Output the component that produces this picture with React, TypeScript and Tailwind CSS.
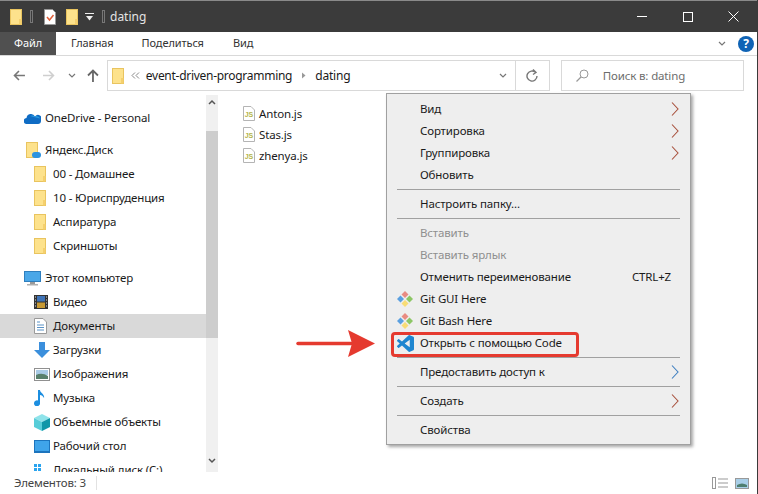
import { ReactNode } from 'react';

const Folder = ({ w = 12, h = 16 }: { w?: number; h?: number }) => (
  <svg width={w} height={h} viewBox="0 0 12 16" className="shrink-0">
    <rect x="0.5" y="0.5" width="11" height="15" fill="#fde28c" stroke="#e9c45f" />
    <rect x="9" y="10" width="2.5" height="5.5" fill="#f5d06e" />
  </svg>
);

const JsFile = () => (
  <svg width="12" height="15" viewBox="0 0 12 15" className="shrink-0">
    <path d="M0.5 0.5H8L11.5 4V14.5H0.5Z" fill="#fff" stroke="#b4b4b4" />
    <text x="6" y="11" textAnchor="middle" fontSize="7" fontWeight="700" fill="#b5b54a" fontFamily="Liberation Sans, sans-serif">JS</text>
  </svg>
);

const GitIcon = () => (
  <svg width="18" height="18" viewBox="0 0 18 18">
    <path d="M9 1L12.5 4.5 9 8 5.5 4.5Z" fill="#e98b82" />
    <path d="M4.5 5.5L8 9 4.5 12.5 1 9Z" fill="#5a9fe0" />
    <path d="M13.5 5.5L17 9 13.5 12.5 10 9Z" fill="#8cc665" />
    <path d="M9 10L12.5 13.5 9 17 5.5 13.5Z" fill="#f8dc75" />
  </svg>
);

const VsCode = () => (
  <svg width="17" height="17" viewBox="0 0 24 24">
    <path
      fill="#1f86d0"
      d="M23.15 2.587L18.21.21a1.494 1.494 0 0 0-1.705.29l-9.46 8.63-4.12-3.128a.999.999 0 0 0-1.276.057L.327 7.261A1 1 0 0 0 .326 8.74L3.899 12 .326 15.26a1 1 0 0 0 .001 1.479L1.65 17.94a.999.999 0 0 0 1.276.057l4.12-3.128 9.46 8.63a1.492 1.492 0 0 0 1.704.29l4.942-2.377A1.5 1.5 0 0 0 24 20.06V3.939a1.5 1.5 0 0 0-.85-1.352zm-5.146 14.861L10.826 12l7.178-5.448v10.896z"
    />
  </svg>
);

const Chevron = ({ color = '#a8503c' }: { color?: string }) => (
  <svg width="8" height="14" viewBox="0 0 8 14" className="shrink-0">
    <path d="M1 0.5L7 7 1 13.5" fill="none" stroke={color} strokeWidth="1.1" />
  </svg>
);

const SmallDown = ({ color = '#777' }: { color?: string }) => (
  <svg width="8" height="6" viewBox="0 0 8 6" className="shrink-0">
    <path d="M1 1L4 4 7 1" fill="none" stroke={color} strokeWidth="1.2" />
  </svg>
);

const Separator = () => <div className="my-[3px] mx-[10px] h-px bg-[#a0a0a0]" />;

const MenuRow = ({ label, icon, right, disabled }: { label: string; icon?: ReactNode; right?: ReactNode; disabled?: boolean }) => (
  <div className={`flex h-[22px] items-center pr-[11px] ${disabled ? 'text-[#8f8f8f]' : 'text-[#1a1a1a]'}`}>
    <div className="flex w-[33px] shrink-0 justify-center pl-[3px]">{icon}</div>
    <span className="flex-1">{label}</span>
    {right}
  </div>
);

const NavRow = ({ label, icon, indent, active, mt }: { label: string; icon: ReactNode; indent?: boolean; active?: boolean; mt?: boolean }) => (
  <div className={`flex h-6 shrink-0 items-center ${indent ? 'pl-[34px]' : 'pl-6'} ${active ? 'bg-[#d9d9d9]' : ''} ${mt ? 'mt-2' : ''}`}>
    <div className={`flex shrink-0 justify-start ${indent ? 'w-[19px]' : 'w-[21px]'}`}>{icon}</div>
    <span className="whitespace-nowrap">{label}</span>
  </div>
);

const OneDrive = () => (
  <svg width="17" height="11" viewBox="0 0 17 11">
    <path d="M3 11a3 3 0 0 1-.5-6A4.5 4.5 0 0 1 11 3.5 3.6 3.6 0 0 1 17 8c0 1.700-1.300 3-3 3Z" fill="#0f6cc4" />
    <path d="M6 3a4.500 4.500 0 0 1 5 .5 3.600 3.600 0 0 1 5 2Z" fill="#2a9be0" />
  </svg>
);

const Monitor = () => (
  <svg width="17" height="15" viewBox="0 0 17 15">
    <rect x="0.500" y="0.500" width="16" height="10" fill="#4aa7e8" stroke="#2f7fbe" />
    <rect x="6" y="11" width="5" height="2" fill="#9a9a9a" />
    <rect x="3" y="13" width="11" height="1.500" fill="#b0b0b0" />
  </svg>
);

const Film = () => (
  <svg width="14" height="14" viewBox="0 0 14 14">
    <rect width="14" height="14" fill="#333" />
    <rect x="3" y="1" width="8" height="5.500" fill="#3f74b8" />
    <rect x="3" y="7.500" width="8" height="5.500" fill="#c79a35" />
    <path d="M1 2h1M1 5h1M1 8h1M1 11h1M12 2h1M12 5h1M12 8h1M12 11h1" stroke="#ddd" />
  </svg>
);

const Doc = () => (
  <svg width="13" height="16" viewBox="0 0 13 16">
    <path d="M.5.5H9L12.500 4V15.500H.5Z" fill="#fff" stroke="#9a9a9a" />
    <path d="M3 4h3M3 7h7M3 9.500h7M3 12h7" stroke="#5b93c7" />
  </svg>
);

const Download = () => (
  <svg width="16" height="16" viewBox="0 0 16 16">
    <path d="M5 0H11V8H16L8 16 0 8H5Z" fill="#3b8fdc" />
  </svg>
);

const Picture = () => (
  <svg width="16" height="13" viewBox="0 0 16 13">
    <rect x="0.500" y="0.500" width="15" height="12" fill="#fff" stroke="#909090" />
    <rect x="2" y="2" width="12" height="5" fill="#a9cbe6" />
    <path d="M2 7Q8 4 14 8V11H2Z" fill="#58806c" />
  </svg>
);

const Music = () => (
  <svg width="12" height="16" viewBox="0 0 12 16">
    <path d="M4 0H6C6 3 11 4 10 8 9 6 7.500 5 6 5V13A3 3 0 1 1 4 10.500Z" fill="#1c8ee0" />
  </svg>
);

const Cube = () => (
  <svg width="16" height="17" viewBox="0 0 16 17">
    <path d="M8 0L16 4 8 8 0 4Z" fill="#8fe3ea" />
    <path d="M0 4L8 8V17L0 13Z" fill="#57cdd8" />
    <path d="M16 4L8 8V17L16 13Z" fill="#0f97a8" />
  </svg>
);

const Desktop = () => (
  <svg width="16" height="13" viewBox="0 0 16 13">
    <rect x="0.500" y="0.500" width="15" height="11" fill="#3fa4ea" stroke="#1c74bd" />
    <rect y="11" width="16" height="2" fill="#1c74bd" />
  </svg>
);

const Drive = () => (
  <svg width="16" height="13" viewBox="0 0 16 13">
    <rect x="0" y="0" width="3" height="3" fill="#2aa4ef" />
    <rect x="4" y="0" width="3" height="3" fill="#2aa4ef" />
    <rect x="0" y="4" width="3" height="3" fill="#2aa4ef" />
    <rect x="4" y="4" width="3" height="3" fill="#2aa4ef" />
    <rect x="1" y="8" width="15" height="5" fill="#c8c8c8" />
  </svg>
);

export default function App() {
  return (
    <div className="relative flex h-[494px] w-[758px] flex-col overflow-hidden border-r border-[#3a3a3a] bg-white font-['Noto_Sans','Open_Sans',sans-serif] text-[11.5px] tracking-[-0.15px] text-[#1a1a1a]">
      {/* заголовок окна */}
      <div className="flex h-8 shrink-0 items-center border-t border-[#8a8a8a] bg-[#3b3b3b] pl-[10px]">
        <Folder />
        <div className="ml-[8px] h-[13px] w-[3px] border border-[#777]" />
        <div className="ml-[11px]">
          <svg width="12" height="16" viewBox="0 0 12 16">
            <path d="M.5.5H8.500L11.500 3.500V15.500H.5Z" fill="#fff" stroke="#999" />
            <path d="M3 8L5.500 11 9.500 6" fill="none" stroke="#e0603a" strokeWidth="1.500" />
          </svg>
        </div>
        <div className="ml-[10px]"><Folder /></div>
        <svg width="9" height="8" viewBox="0 0 9 8" className="ml-[7px]">
          <path d="M0 0.500H9" stroke="#eee" />
          <path d="M1 3H8L4.500 7.500Z" fill="#eee" />
        </svg>
        <div className="ml-[8px] h-[13px] w-[3px] border border-[#777]" />
        <span className="ml-[5px] text-[12px] tracking-normal text-[#e4e4e4]">dating</span>
        <div className="ml-auto flex items-center pr-[18px]">
          <div className="h-px w-[10px] bg-white" />
          <div className="ml-[36px] h-[10px] w-[10px] border border-white" />
          <svg width="11" height="11" viewBox="0 0 11 11" className="ml-[35px]">
            <path d="M.5.5L10.500 10.500M10.500.5L.5 10.500" stroke="#fff" />
          </svg>
        </div>
      </div>

      {/* вкладки */}
      <div className="flex h-6 shrink-0 items-center border-b border-[#d9d9d9] pr-[3px] text-[11px] tracking-[-0.1px] text-[#333]">
        <div className="flex h-full w-14 items-center justify-center bg-[#505050] text-white">Файл</div>
        <span className="ml-[15px]">Главная</span>
        <span className="ml-[28px]">Поделиться</span>
        <span className="ml-[29px]">Вид</span>
        <div className="ml-auto flex items-center gap-[12px]">
          <SmallDown />
          <div className="flex h-4 w-4 items-center justify-center rounded-full bg-[#0f63b5] text-[12px] font-bold text-white">?</div>
        </div>
      </div>

      {/* адресная строка */}
      <div className="flex h-[39px] shrink-0 items-center pl-[13px] pr-[13px]">
        <svg width="12" height="11" viewBox="0 0 12 11"><path d="M12 5.500H1.500M6 1L1.500 5.500 6 10" fill="none" stroke="#777" strokeWidth="1.600" /></svg>
        <svg width="12" height="11" viewBox="0 0 12 11" className="ml-[18px]"><path d="M0 5.500H10.500M6 1L10.500 5.500 6 10" fill="none" stroke="#cfcfcf" strokeWidth="1.600" /></svg>
        <div className="ml-[13px]"><SmallDown /></div>
        <svg width="12" height="13" viewBox="0 0 12 13" className="ml-[11px]"><path d="M6 13V1.500M1 6.500L6 1.500 11 6.500" fill="none" stroke="#666" strokeWidth="1.800" /></svg>
        <div className="ml-[8px] flex h-[31px] w-[445px] items-center border border-[#d9d9d9] pl-[4px]">
          <Folder />
          <svg width="9" height="7" viewBox="0 0 9 7" className="ml-[7px]"><path d="M4 0.500L1 3.500 4 6.500M8 0.500L5 3.500 8 6.500" fill="none" stroke="#888" /></svg>
          <span className="ml-[6px] text-[12px] tracking-[-0.28px]">event-driven-programming</span>
          <svg width="5" height="7" viewBox="0 0 5 7" className="ml-[9px]"><path d="M1 0.500L4.500 3.500 1 6.500Z" fill="#999" /></svg>
          <span className="ml-[9px] text-[12px] tracking-[-0.2px]">dating</span>
          <div className="ml-auto flex h-full items-center">
            <SmallDown />
            <div className="ml-[8px] flex h-full w-[34px] items-center justify-center border-l border-[#d9d9d9]">
              <svg width="12" height="13" viewBox="0 0 12 13"><path d="M9.500 3.500A5 5 0 1 0 11 7M7 0.500L10 3.500 7 5.500" fill="none" stroke="#777" strokeWidth="1.400" /></svg>
            </div>
          </div>
        </div>
        <div className="ml-[11px] flex h-[31px] w-[184px] items-center border border-[#d9d9d9] pl-[14px] text-[#6d6d6d]">
          <svg width="13" height="13" viewBox="0 0 13 13"><circle cx="8" cy="5" r="4" fill="none" stroke="#999" /><path d="M5 8L.5 12.500" stroke="#999" strokeWidth="1.200" /></svg>
          <span className="ml-[14px]">Поиск в: dating</span>
        </div>
      </div>

      {/* основная часть */}
      <div className="flex min-h-0 flex-1">
        <div className="flex w-[206px] shrink-0 flex-col overflow-hidden pt-[11px]">
          <NavRow label="OneDrive - Personal" icon={<OneDrive />} />
          <NavRow
            mt
            label="Яндекс.Диск"
            icon={
              <div className="relative ml-[2px]">
                <Folder />
                <div className="absolute bottom-0 right-[-3px] h-[6px] w-[9px] rounded-full bg-[#2c93e0]" />
              </div>
            }
          />
          <NavRow indent label="00 - Домашнее" icon={<Folder />} />
          <NavRow indent label="10 - Юриспруденция" icon={<Folder />} />
          <NavRow indent label="Аспиратура" icon={<Folder />} />
          <NavRow indent label="Скриншоты" icon={<Folder />} />
          <NavRow mt label="Этот компьютер" icon={<Monitor />} />
          <NavRow indent label="Видео" icon={<Film />} />
          <NavRow indent active label="Документы" icon={<Doc />} />
          <NavRow indent label="Загрузки" icon={<Download />} />
          <NavRow indent label="Изображения" icon={<Picture />} />
          <NavRow indent label="Музыка" icon={<Music />} />
          <NavRow indent label="Объемные объекты" icon={<Cube />} />
          <NavRow indent label="Рабочий стол" icon={<Desktop />} />
          <NavRow indent label="Локальный диск (C:)" icon={<Drive />} />
        </div>
        <div className="flex w-[12px] shrink-0 flex-col bg-[#f0f0f0]">
          <div className="flex h-[36px] shrink-0 justify-center pt-[4px]">
            <svg width="8" height="6" viewBox="0 0 8 6"><path d="M1 5L4 2 7 5" fill="none" stroke="#555" strokeWidth="1.500" /></svg>
          </div>
          <div className="h-[207px] shrink-0 bg-[#cdcdcd]" />
          <div className="mt-auto flex h-[14px] justify-center">
            <svg width="8" height="6" viewBox="0 0 8 6"><path d="M1 1L4 4 7 1" fill="none" stroke="#555" strokeWidth="1.500" /></svg>
          </div>
        </div>
        <div className="flex flex-col pl-[25px] pt-[8px]">
          {['Anton.js', 'Stas.js', 'zhenya.js'].map((name) => (
            <div key={name} className="flex h-[21px] items-center gap-[4px]">
              <JsFile />
              <span>{name}</span>
            </div>
          ))}
        </div>
      </div>

      {/* строка состояния */}
      <div className="flex h-[22px] shrink-0 items-center pl-[14px] text-[#444]">
        <span>Элементов: 3</span>
        <div className="ml-[10px] h-[14px] w-px bg-[#e2e2e2]" />
        <div className="ml-auto flex items-center gap-[7px] pr-[8px]">
          <svg width="16" height="12" viewBox="0 0 16 12">
            <rect x=".5" y=".5" width="3" height="11" fill="#fff" stroke="#999" />
            <path d="M6 2h10M6 6h10M6 10h10" stroke="#999" />
          </svg>
          <svg width="14" height="11" viewBox="0 0 14 11">
            <rect x=".5" y=".5" width="13" height="10" fill="#a9cfe8" stroke="#999" />
            <path d="M2 7Q7 4 12 7V9H2Z" fill="#4f7f70" />
          </svg>
        </div>
      </div>

      {/* контекстное меню */}
      <div className="absolute left-[386px] top-[93px] w-[305px] border border-[#a0a0a0] bg-[#eeeeee] pb-[3px] pt-[4px] shadow-[2px_2px_3px_rgba(0,0,0,0.35)]">
        <MenuRow label="Вид" right={<Chevron />} />
        <MenuRow label="Сортировка" right={<Chevron />} />
        <MenuRow label="Группировка" right={<Chevron />} />
        <MenuRow label="Обновить" />
        <Separator />
        <MenuRow label="Настроить папку..." />
        <Separator />
        <MenuRow disabled label="Вставить" />
        <MenuRow disabled label="Вставить ярлык" />
        <MenuRow label="Отменить переименование" right={<span className="mr-[8px]">CTRL+Z</span>} />
        <MenuRow label="Git GUI Here" icon={<GitIcon />} />
        <MenuRow label="Git Bash Here" icon={<GitIcon />} />
        <MenuRow label="Открыть с помощью Code" icon={<VsCode />} />
        <Separator />
        <MenuRow label="Предоставить доступ к" right={<Chevron color="#3f7fc0" />} />
        <Separator />
        <MenuRow label="Создать" right={<Chevron />} />
        <Separator />
        <MenuRow label="Свойства" />
        <div className="absolute left-[4px] top-[238px] h-[25px] w-[188px] rounded-[4px] border-[3px] border-[#e53a2f]" />
      </div>

      {/* стрелка-выноска */}
      <svg width="80" height="30" viewBox="0 0 80 30" className="absolute left-[296px] top-[329px]">
        <path d="M2 14.500H56" stroke="#e53a2f" strokeWidth="3.500" strokeLinecap="round" />
        <path d="M52 1L79 14.500 52 28 56 14.500Z" fill="#e53a2f" />
      </svg>
    </div>
  );
}
